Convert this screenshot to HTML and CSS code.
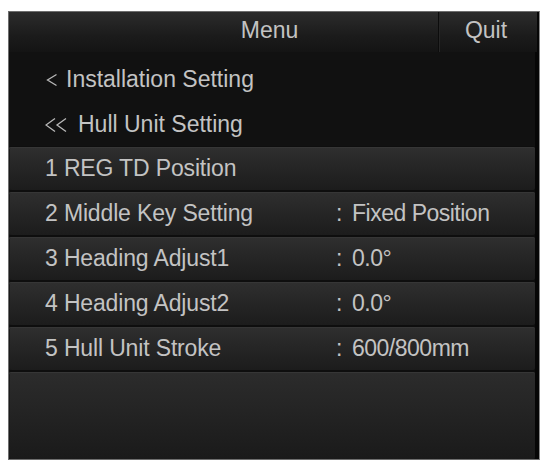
FILE: index.html
```html
<!DOCTYPE html>
<html>
<head>
<meta charset="utf-8">
<link rel="stylesheet" href="styles.css">
</head>
<body>
<div class="panel">
  <div class="header">
    <div class="title">Menu</div>
    <div class="quit">Quit</div>
  </div>
  <div class="nav">
    <div class="nav-item">
      <svg class="chev" width="21" height="14" viewBox="0 0 21 14"><path d="M11.5 1.5 L2.5 7 L11.5 12.5" fill="none" stroke="#b9b9b9" stroke-width="1.3"/></svg>Installation Setting
    </div>
    <div class="nav-item">
      <svg class="chev2" width="33" height="16" viewBox="0 0 33 16"><path d="M10 1.5 L1 8 L10 14.5 M21 1.5 L12 8 L21 14.5" fill="none" stroke="#b9b9b9" stroke-width="1.3"/></svg>Hull Unit Setting
    </div>
  </div>
  <div class="rows">
    <div class="row"><span class="label">1 REG TD Position</span></div>
    <div class="row"><span class="label">2 Middle Key Setting</span><span class="colon">:</span><span class="value">Fixed Position</span></div>
    <div class="row"><span class="label">3 Heading Adjust1</span><span class="colon">:</span><span class="value">0.0°</span></div>
    <div class="row"><span class="label">4 Heading Adjust2</span><span class="colon">:</span><span class="value">0.0°</span></div>
    <div class="row"><span class="label">5 Hull Unit Stroke</span><span class="colon">:</span><span class="value">600/800mm</span></div>
    <div class="row filler"></div>
  </div>
</div>
</body>
</html>
```
FILE: styles.css
```css
html, body {
  margin: 0;
  padding: 0;
  background: #ffffff;
}
body {
  padding: 11px 0 0 8px;
}
.panel {
  width: 526px;
  height: 447px;
  border: 1px solid #6e6e6e;
  border-right: 1px solid #8a8a8a;
  padding-right: 4px;
  background: #101010;
  box-shadow: inset -4px 0 0 #060606;
  display: flex;
  flex-direction: column;
  font-family: "Liberation Sans", Arial, sans-serif;
  font-size: 23px;
  color: #c3c3c3;
  overflow: hidden;
}
.header {
  height: 40px;
  display: flex;
  background: linear-gradient(#2c2c2c, #1b1b1b 60%, #141414);
  margin-right: -2px;
}
.title {
  flex: 1;
  display: flex;
  align-items: center;
  justify-content: center;
  padding-left: 92px;
  padding-bottom: 3px;
}
.quit {
  width: 94px;
  display: flex;
  align-items: center;
  justify-content: center;
  border-left: 1px solid #0c0c0c;
  box-shadow: inset 1px 0 0 #262626;
  padding-bottom: 3px;
  padding-right: 4px;
}
.nav {
  display: flex;
  flex-direction: column;
  gap: 2px;
  padding-top: 6px;
  background: #111111;
}
.nav-item {
  height: 43px;
  display: flex;
  align-items: center;
  padding-left: 36px;
}
.chev,
.chev2 {
  flex-shrink: 0;
  margin-top: 1px;
}
.rows {
  flex: 1;
  display: flex;
  flex-direction: column;
  gap: 2px;
  padding-top: 1px;
  background: #0e0e0e;
}
.row {
  height: 43px;
  flex-shrink: 0;
  display: flex;
  align-items: center;
  padding-left: 36px;
  background: linear-gradient(#2f2f2f, #262626 45%, #1c1c1c);
  box-shadow: inset 0 1px 0 #363636, inset 1px 0 0 #1a1a1a;
  border-radius: 2px;
}
.row.filler {
  flex: 1;
  height: auto;
  background: linear-gradient(#2c2c2c, #232323 50%, #1a1a1a);
}
.label {
  width: 291px;
  letter-spacing: -0.15px;
}
.colon {
  width: 16px;
}
.value {
  letter-spacing: -0.5px;
}
```
